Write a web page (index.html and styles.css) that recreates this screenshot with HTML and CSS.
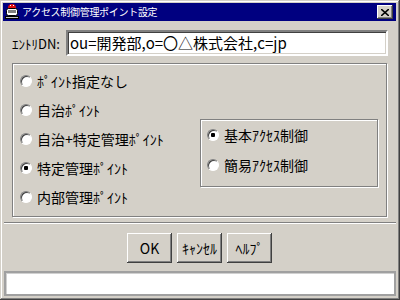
FILE: index.html
```html
<!DOCTYPE html>
<html lang="ja">
<head>
    <meta charset="UTF-8">
    <title>アクセス制御管理ポイント設定</title>
    <link rel="stylesheet" href="styles.css">
</head>
<body>
    <div class="window">
        <div class="titlebar">
            <svg class="app-icon" viewBox="0 0 16 16" width="16" height="16">
                <path d="M4 4 Q4 0 8 0 Q12 0 12 4 Z" fill="#e01010"/>
                <rect x="6" y="1" width="1" height="1" fill="#fff"/>
                <rect x="9" y="1" width="1" height="1" fill="#fff"/>
                <rect x="2.5" y="4.5" width="11" height="7" rx="2" fill="#fff" stroke="#000"/>
                <rect x="4" y="6" width="8" height="3" fill="#808080"/>
                <rect x="1.5" y="12.5" width="13" height="2" fill="#c0c0c0" stroke="#000"/>
            </svg>
            <span class="title">アクセス制御管理ポイント設定</span>
            <span class="close-btn">
                <svg viewBox="0 0 8 7" width="8" height="7">
                    <path d="M0 0 L8 7 M8 0 L0 7" stroke="#000" stroke-width="1.6"/>
                </svg>
            </span>
        </div>

        <div class="content">
            <div class="entry-row">
                <span class="entry-label">ｴﾝﾄﾘDN:</span>
                <div class="field">ou=開発部,o=〇△株式会社,c=jp</div>
            </div>

            <div class="group">
                <div class="radio-list">
                    <div class="radio-item"><span class="radio"></span>ﾎﾟｲﾝﾄ指定なし</div>
                    <div class="radio-item"><span class="radio"></span>自治ﾎﾟｲﾝﾄ</div>
                    <div class="radio-item"><span class="radio"></span>自治+特定管理ﾎﾟｲﾝﾄ</div>
                    <div class="radio-item"><span class="radio checked"></span>特定管理ﾎﾟｲﾝﾄ</div>
                    <div class="radio-item"><span class="radio"></span>内部管理ﾎﾟｲﾝﾄ</div>
                </div>
                <div class="sub-group">
                    <div class="radio-item sub"><span class="radio checked"></span>基本ｱｸｾｽ制御</div>
                    <div class="radio-item sub"><span class="radio"></span>簡易ｱｸｾｽ制御</div>
                </div>
            </div>
        </div>

        <div class="separator"></div>

        <div class="buttons">
            <button type="button" class="btn">OK</button>
            <button type="button" class="btn">ｷｬﾝｾﾙ</button>
            <button type="button" class="btn">ﾍﾙﾌﾟ</button>
        </div>

        <div class="status"></div>
    </div>
</body>
</html>
```

FILE: styles.css
```css
/* General */
body {
    margin: 0;
    background: #d4d0c8;
    font-family: "Noto Sans CJK JP", "DejaVu Sans", sans-serif;
    color: #000;
}

/* Window frame */
.window {
    width: 400px;
    height: 300px;
    box-sizing: border-box;
    padding: 3px 4px 4px 3px;
    background: #d4d0c8;
    box-shadow: inset -1px -1px 0 #404040, inset 1px 1px 0 #d4d0c8,
                inset -2px -2px 0 #808080, inset 2px 2px 0 #fff;
    display: flex;
    flex-direction: column;
}

/* Title bar */
.titlebar {
    height: 18px;
    background: #000080;
    display: flex;
    align-items: center;
}

.app-icon {
    margin-left: 1px;
    margin-right: 2px;
}

.title {
    flex: 1;
    color: #fff;
    font-size: 10px;
    letter-spacing: -0.3px;
    line-height: 18px;
    white-space: nowrap;
}

.close-btn {
    width: 16px;
    height: 14px;
    box-sizing: border-box;
    margin-right: 3px;
    background: #d4d0c8;
    box-shadow: inset -1px -1px 0 #404040, inset 1px 1px 0 #fff, inset -2px -2px 0 #808080;
    display: flex;
    align-items: center;
    justify-content: center;
}

/* Entry row */
.content {
    padding: 0 8px 0 9px;
}

.entry-row {
    display: flex;
    align-items: center;
    margin-top: 9px;
    height: 26px;
}

.entry-label {
    width: 54px;
    font-size: 13px;
    white-space: nowrap;
}

.field {
    flex: 1;
    height: 26px;
    box-sizing: border-box;
    background: #fff;
    border: 2px solid;
    border-color: #808080 #fff #fff #808080;
    box-shadow: inset 1px 1px 0 #404040, inset -1px -1px 0 #d4d0c8;
    font-size: 15px;
    line-height: 21px;
    padding-left: 2px;
    white-space: nowrap;
    overflow: hidden;
}

/* Group boxes */
.group {
    margin-top: 7px;
    margin-right: 1px;
    height: 154px;
    box-sizing: border-box;
    border: 1px solid #808080;
    box-shadow: 1px 1px 0 #fff, inset 1px 1px 0 #fff;
    padding: 2px 0 0 7px;
    display: flex;
}

.radio-list {
    width: 180px;
}

.radio-item {
    height: 29px;
    display: flex;
    align-items: center;
    font-size: 14px;
    white-space: nowrap;
}

.radio-item.sub {
    height: 30px;
}

.sub-group {
    margin-top: 53px;
    width: 178px;
    height: 68px;
    box-sizing: border-box;
    border: 1px solid #808080;
    box-shadow: 1px 1px 0 #fff, inset 1px 1px 0 #fff;
    padding-left: 6px;
}

/* Radio buttons */
.radio {
    position: relative;
    width: 12px;
    height: 12px;
    box-sizing: border-box;
    border-radius: 50%;
    background: #fff;
    border: 1px solid;
    border-color: #808080 #fff #fff #808080;
    box-shadow: inset 1px 1px 0 #404040;
    margin-right: 5px;
    flex-shrink: 0;
}

.radio.checked::after {
    content: "";
    position: absolute;
    left: 3px;
    top: 3px;
    width: 4px;
    height: 4px;
    border-radius: 1px;
    background: #000;
}

/* Separator */
.separator {
    margin: 5px 0 0 1px;
    height: 0;
    border-top: 1px solid #808080;
    border-bottom: 1px solid #fff;
}

/* Buttons */
.buttons {
    margin-top: 9px;
    display: flex;
    justify-content: center;
    gap: 5px;
}

.btn {
    width: 45px;
    height: 30px;
    padding: 0;
    border: none;
    background: #d4d0c8;
    box-shadow: inset -1px -1px 0 #404040, inset 1px 1px 0 #fff, inset -2px -2px 0 #808080;
    font-family: "Noto Sans CJK JP", "DejaVu Sans", sans-serif;
    font-size: 14px;
    color: #000;
}

/* Status box */
.status {
    margin: 8px 0 0 1px;
    height: 25px;
    box-sizing: border-box;
    background: #fff;
    border: 2px solid #a0a0a0;
    box-shadow: inset 1px 1px 0 #d0d0d0;
}
```
